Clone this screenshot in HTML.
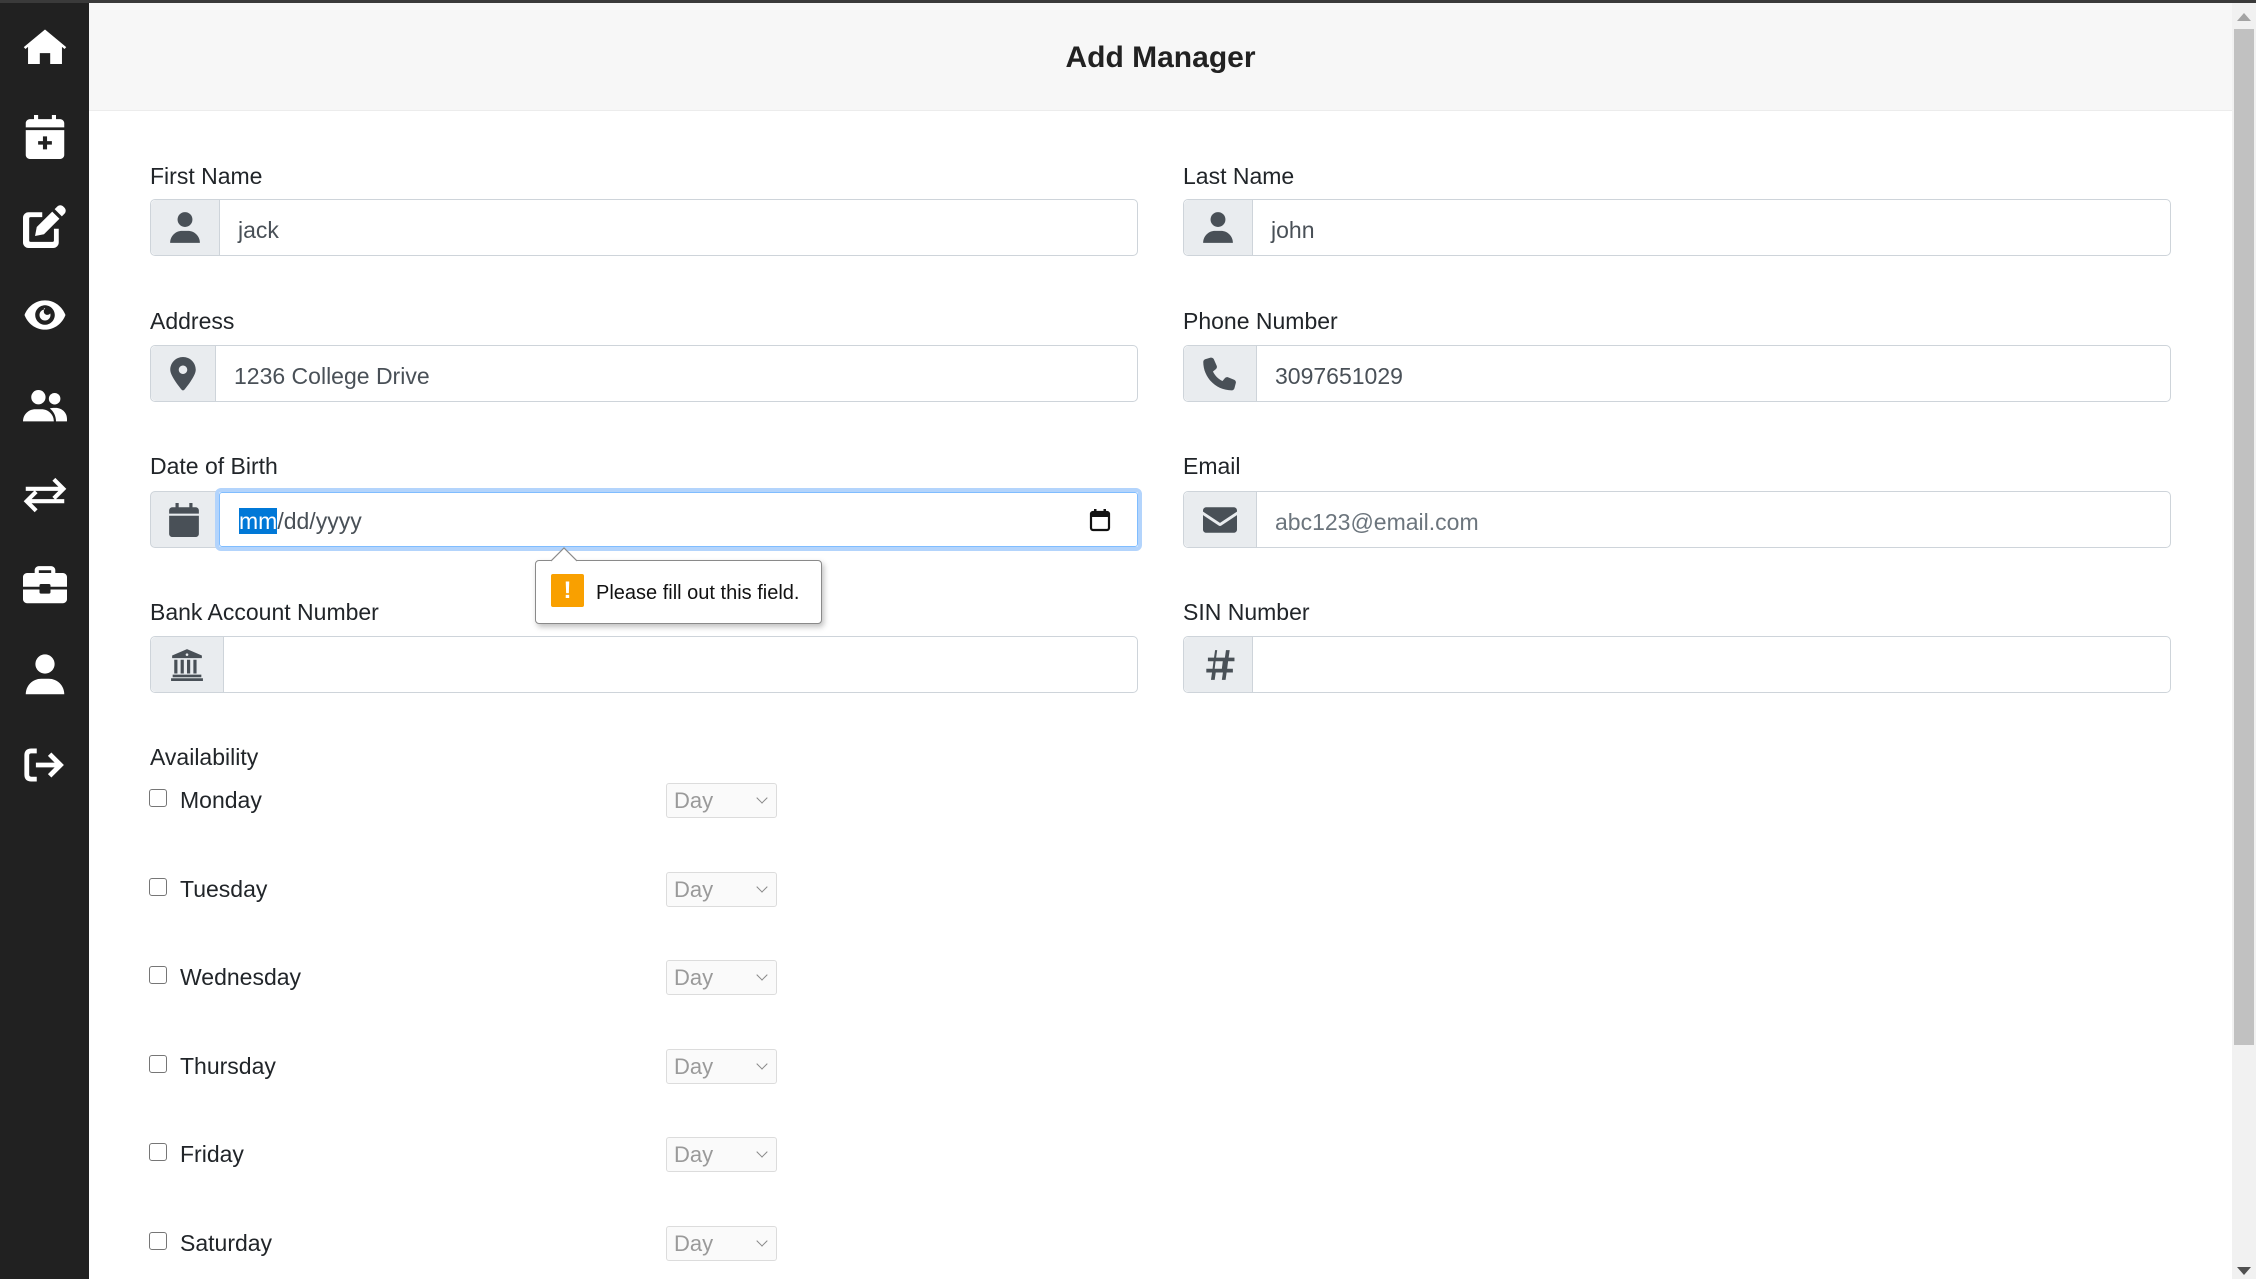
<!DOCTYPE html>
<html><head><meta charset="utf-8"><style>
*{box-sizing:border-box;margin:0;padding:0}
body{width:2256px;height:1279px;overflow:hidden;background:#fff;font-family:"Liberation Sans",sans-serif;color:#212529;position:relative}
.topline{position:absolute;left:0;top:0;width:2256px;height:3px;background:#3a3a3a;z-index:5}
.side{position:absolute;left:0;top:0;width:89px;height:1279px;background:#212121}
.side svg{position:absolute;left:23px;width:44px;height:44px;fill:#fff}
.head{position:absolute;left:89px;top:3px;width:2143px;height:108px;background:#f7f7f7;border-bottom:1px solid #ececec}
.head h1{position:absolute;left:0;right:0;top:38px;text-align:center;font-size:30px;font-weight:bold;color:#222}
.lbl{position:absolute;font-size:23px;line-height:28px;color:#212529}
.grp{position:absolute;height:57px;border:1px solid #ced4da;border-radius:5px;background:#fff;display:flex;overflow:visible}
.add{background:#e9ecef;border-right:1px solid #ced4da;display:flex;align-items:center;justify-content:center;border-radius:5px 0 0 5px}
.add svg{width:34px;height:34px;fill:#495057}
.val{font-size:23px;line-height:55px;padding-left:18px;padding-top:3px;color:#495057}
.ph{color:#6c757d}
.cb{position:absolute;left:149px;width:18px;height:18px;border:1.5px solid #767676;border-radius:3px;background:#fff}
.day{position:absolute;left:180px;font-size:23px;line-height:28px}
.sel{position:absolute;left:666px;width:111px;height:35px;border:1px solid #dcdcdc;border-radius:3px;background:#fafafa;color:#9a9a9a;font-size:22px;line-height:33px;padding-left:7px}
.sel:after{content:"";position:absolute;right:10px;top:10px;width:7px;height:7px;border-right:1.5px solid #888;border-bottom:1.5px solid #888;transform:rotate(45deg)}
.scroll{position:absolute;left:2232px;top:3px;width:24px;height:1276px;background:#f1f1f1}
.thumb{position:absolute;left:2234px;top:29px;width:20px;height:1016px;background:#c1c1c1}
</style></head><body>
<div class="topline"></div>
<div class="side">
<svg style="top:24px" viewBox="0 0 576 512"><path d="M288 40L10 270l22 26 34-28v224h154V350h136v142h154V268l34 28 22-26z"/></svg>
<svg style="top:115px" viewBox="0 0 448 512"><path d="M96 0h48v48h160V0h48v48h48c26 0 48 22 48 48v48H0V96c0-26 22-48 48-48h48zM0 176h448v288c0 26-22 48-48 48H48c-26 0-48-22-48-48zm200 72v56h-56v40h56v56h48v-56h56v-40h-56v-56z"/></svg>
<svg style="top:204px" viewBox="0 0 512 512"><path d="M470 30c-20-20-52-20-72 0l-30 30 84 84 30-30c20-20 20-52 0-72zM340 88L160 268l-20 104 104-20 180-180zM64 96h160v56H88c-10 0-16 6-16 16v256c0 10 6 16 16 16h256c10 0 16-6 16-16V288h56v160c0 35-29 64-64 64H64c-35 0-64-29-64-64V160c0-35 29-64 64-64z"/></svg>
<svg style="top:293px" viewBox="0 0 576 512"><path d="M288 64C160 64 60 150 20 256c40 106 140 192 268 192s228-86 268-192C516 150 416 64 288 64zm0 320c-70 0-128-58-128-128s58-128 128-128 128 58 128 128-58 128-128 128zm0-200c-40 0-72 32-72 72s32 72 72 72 72-32 72-72c0-8-2-16-4-22-8 12-22 20-38 20-26 0-46-20-46-46 0-16 8-30 20-38-6-4-14-6-22-6z"/></svg>
<svg style="top:384px" viewBox="0 0 640 512"><circle cx="224" cy="128" r="104"/><path d="M0 480c0-100 80-176 180-176h88c100 0 180 76 180 176z"/><circle cx="460" cy="150" r="84"/><path d="M390 292c20-6 44-8 66-8h20c90 0 164 70 164 160v36H480c0-80-36-148-90-188z"/></svg>
<svg style="top:473px" viewBox="0 0 512 512"><path d="M32 160h380l-70-70 34-34 128 128-128 128-34-34 70-70H32zM480 352H100l70 70-34 34L8 328l128-128 34 34-70 70h380z"/></svg>
<svg style="top:562px" viewBox="0 0 512 512"><path d="M184 48h144c26 0 48 22 48 48v32h88c26 0 48 22 48 48v112H320v-16c0-9-7-16-16-16h-96c-9 0-16 7-16 16v16H0V176c0-26 22-48 48-48h88V96c0-26 22-48 48-48zm0 80h144V96H184zM0 320h192v32c0 9 7 16 16 16h96c9 0 16-7 16-16v-32h192v112c0 26-22 48-48 48H48c-26 0-48-22-48-48z"/></svg>
<svg style="top:653px" viewBox="0 0 448 512"><circle cx="224" cy="128" r="112"/><path d="M0 480c0-100 80-180 180-180h88c100 0 180 80 180 180z"/></svg>
<svg style="top:743px" viewBox="0 0 512 512"><path d="M160 64H96C44 64 16 92 16 144v224c0 52 28 80 80 80h64v-56H96c-16 0-24-8-24-24V144c0-16 8-24 24-24h64zM330 110l-40 40 78 78H150v56h218l-78 78 40 40 146-146z"/></svg>
</div>
<div class="head"><h1>Add Manager</h1></div>

<div class="lbl" style="left:150px;top:162px">First Name</div>
<div class="grp" style="left:150px;top:199px;width:988px"><div class="add" style="width:69px"><svg viewBox="0 0 448 512"><circle cx="224" cy="128" r="112"/><path d="M0 480c0-100 80-180 180-180h88c100 0 180 80 180 180z"/></svg></div><div class="val">jack</div></div>
<div class="lbl" style="left:1183px;top:162px">Last Name</div>
<div class="grp" style="left:1183px;top:199px;width:988px"><div class="add" style="width:69px"><svg viewBox="0 0 448 512"><circle cx="224" cy="128" r="112"/><path d="M0 480c0-100 80-180 180-180h88c100 0 180 80 180 180z"/></svg></div><div class="val">john</div></div>

<div class="lbl" style="left:150px;top:307px">Address</div>
<div class="grp" style="left:150px;top:345px;width:988px"><div class="add" style="width:65px"><svg viewBox="0 0 384 512"><path d="M192 0C86 0 0 86 0 192c0 90 130 250 172 302 10 12 30 12 40 0 42-52 172-212 172-302C384 86 298 0 192 0zm0 256c-35 0-64-29-64-64s29-64 64-64 64 29 64 64-29 64-64 64z"/></svg></div><div class="val">1236 College Drive</div></div>
<div class="lbl" style="left:1183px;top:307px">Phone Number</div>
<div class="grp" style="left:1183px;top:345px;width:988px"><div class="add" style="width:73px"><svg viewBox="0 0 512 512"><path d="M164 36c-8-20-30-30-50-26L38 32C18 36 4 54 4 74c0 236 192 428 428 428 20 0 38-14 42-34l20-76c6-20-6-42-26-50l-88-36c-18-8-38-2-50 12l-36 44C228 330 182 284 150 218l44-36c14-12 20-32 12-50z"/></svg></div><div class="val">3097651029</div></div>

<div class="lbl" style="left:150px;top:452px">Date of Birth</div>
<div class="grp" style="left:150px;top:491px;width:988px;border:none"><div class="add" style="width:68px;border:1px solid #ced4da"><svg viewBox="0 0 448 512"><path d="M96 0h48v64h160V0h48v64h48c26 0 48 22 48 48v48H0v-48c0-26 22-48 48-48h48zM0 192h448v272c0 26-22 48-48 48H48c-26 0-48-22-48-48z"/></svg></div></div>
<div style="position:absolute;left:215px;top:488px;width:927px;height:63px;border:4px solid #b3d4fc;border-radius:6px"></div>
<div style="position:absolute;left:219px;top:492px;width:919px;height:55px;border:1px solid #80bdff;border-radius:3px;background:#fff;font-size:23px;line-height:53px;padding-left:19px;padding-top:2px;color:#495057"><span style="background:#0078d7;color:#fff">mm</span>/dd/yyyy
<svg style="position:absolute;right:26px;top:15px;width:22px;height:24px" viewBox="0 0 22 24"><rect x="2" y="4" width="18" height="18" rx="2" fill="none" stroke="#111" stroke-width="2.2"/><rect x="2" y="4" width="18" height="5" fill="#111"/><rect x="5" y="1" width="2.5" height="5" fill="#111"/><rect x="14.5" y="1" width="2.5" height="5" fill="#111"/></svg></div>

<div class="lbl" style="left:1183px;top:452px">Email</div>
<div class="grp" style="left:1183px;top:491px;width:988px"><div class="add" style="width:73px"><svg viewBox="0 0 512 512"><path d="M48 64h416c26 0 48 22 48 48v18L256 300 0 130v-18c0-26 22-48 48-48zM0 182l238 158c12 8 24 8 36 0l238-158v218c0 26-22 48-48 48H48c-26 0-48-22-48-48z"/></svg></div><div class="val ph">abc123@email.com</div></div>

<div class="lbl" style="left:150px;top:598px">Bank Account Number</div>
<div class="grp" style="left:150px;top:636px;width:988px"><div class="add" style="width:73px"><svg viewBox="0 0 512 512"><path d="M256 16L32 112v40h448v-40zM256 80a20 20 0 1 1 0 40 20 20 0 1 1 0-40zM64 176h48v208H64zm96 0h48v208h-48zm96 0h48v208h-48zm96 0h48v208h-48zM40 400h432v40H40zM16 456h480v40H16z"/></svg></div></div>
<div class="lbl" style="left:1183px;top:598px">SIN Number</div>
<div class="grp" style="left:1183px;top:636px;width:988px"><div class="add" style="width:69px"><svg viewBox="0 0 448 512"><path d="M180 32l-16 112H72v56h84l-14 112H48v56h86l-16 112h56l16-112h108l-16 112h56l16-112h94v-56h-86l14-112h96v-56h-88l16-112h-56l-16 112H196l16-112zm8 168h108l-14 112H174z"/></svg></div></div>

<div style="position:absolute;left:535px;top:560px;width:287px;height:64px;background:#fff;border:1px solid #8a8a8a;border-radius:4px;box-shadow:2px 3px 6px rgba(0,0,0,.25)">
<div style="position:absolute;left:15px;top:13px;width:33px;height:33px;background:#f9a000;border-radius:2px;color:#fff;font-weight:bold;font-size:24px;text-align:center;line-height:33px">!</div>
<div style="position:absolute;left:60px;top:20px;font-size:20px;line-height:24px;color:#111;white-space:nowrap">Please fill out this field.</div>
</div>
<svg style="position:absolute;left:551px;top:547px" width="26" height="15" viewBox="0 0 26 15"><path d="M0 14L13 1l13 13" fill="#fff" stroke="#8a8a8a" stroke-width="1.2"/><rect x="1" y="14" width="24" height="2" fill="#fff"/></svg>

<div class="lbl" style="left:150px;top:743px">Availability</div>
<div class="cb" style="top:789px"></div><div class="day" style="top:786px">Monday</div><div class="sel" style="top:783px">Day</div>
<div class="cb" style="top:878px"></div><div class="day" style="top:875px">Tuesday</div><div class="sel" style="top:872px">Day</div>
<div class="cb" style="top:966px"></div><div class="day" style="top:963px">Wednesday</div><div class="sel" style="top:960px">Day</div>
<div class="cb" style="top:1055px"></div><div class="day" style="top:1052px">Thursday</div><div class="sel" style="top:1049px">Day</div>
<div class="cb" style="top:1143px"></div><div class="day" style="top:1140px">Friday</div><div class="sel" style="top:1137px">Day</div>
<div class="cb" style="top:1232px"></div><div class="day" style="top:1229px">Saturday</div><div class="sel" style="top:1226px">Day</div>

<div class="scroll"></div><div class="thumb"></div>
<svg style="position:absolute;left:2236px;top:12px" width="16" height="10" viewBox="0 0 16 10"><path d="M8 1L15 9H1z" fill="#a3a3a3"/></svg>
<svg style="position:absolute;left:2236px;top:1266px" width="16" height="10" viewBox="0 0 16 10"><path d="M8 9L15 1H1z" fill="#505050"/></svg>
</body></html>
